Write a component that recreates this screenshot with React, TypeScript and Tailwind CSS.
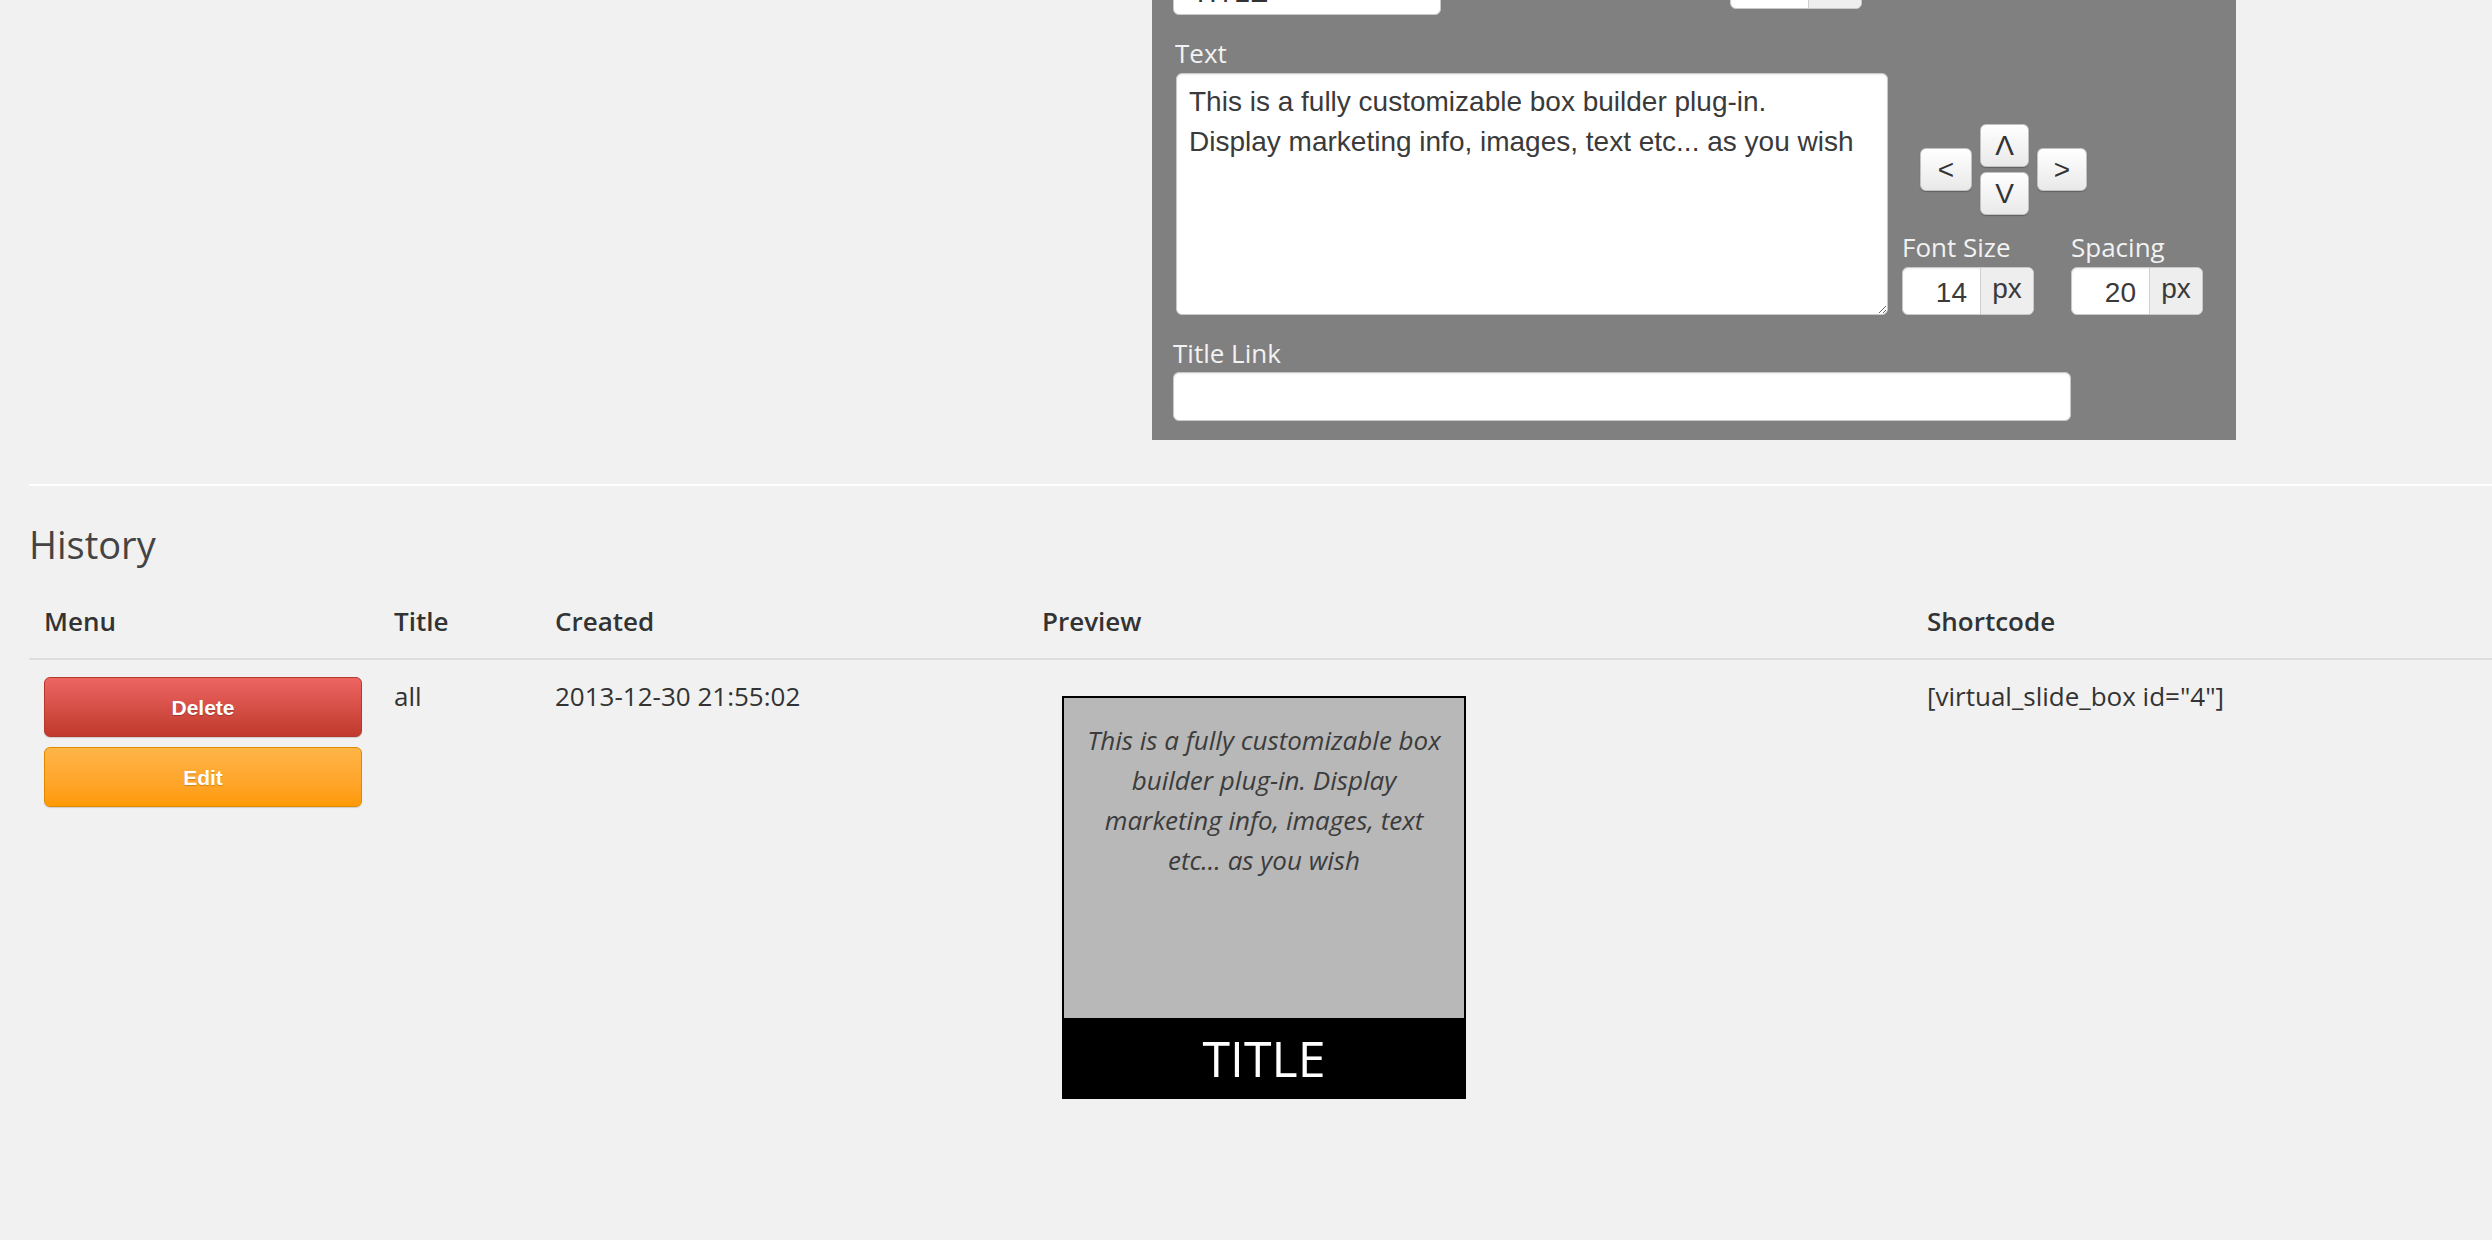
import React from 'react';

const ArrowKey: React.FC<{ label: string; className?: string }> = ({ label, className }) => (
  <div
    className={`h-[43px] flex items-center justify-center rounded-[6px] border border-[#c2c2c2] bg-gradient-to-b from-white to-[#e9e9e9] shadow-[0_1px_1px_rgba(0,0,0,0.25)] text-[28px] text-[#333] font-['Liberation_Sans',Arial,sans-serif] ${className ?? ''}`}
  >
    {label}
  </div>
);

const PxInput: React.FC<{ value: string; label?: string }> = ({ value, label }) => (
  <div>
    {label && <div className="text-[26px] leading-[36px] text-[#f2f2f2]">{label}</div>}
    <div className={`${label ? 'mt-[2px]' : ''} flex h-[48px] w-[132px] rounded-[6px] border border-[#c9c9c9] bg-white overflow-hidden shadow-[inset_0_1px_2px_rgba(0,0,0,0.07)] font-['Liberation_Sans',Arial,sans-serif] text-[28px] text-[#3a3a3a]`}>
      <div className="w-[77px] flex items-center justify-end pr-[13px] pt-[4px]">{value}</div>
      <div className="flex-1 flex items-center justify-center border-l border-[#cfcfcf] bg-[#eeeeee] pb-[4px]">px</div>
    </div>
  </div>
);

const previewLines = [
  'This is a fully customizable box',
  'builder plug-in. Display',
  'marketing info, images, text',
  'etc... as you wish',
];

export default function App() {
  return (
    <div className="min-h-screen w-full overflow-hidden bg-[#f1f1f1] font-['Open_Sans',sans-serif] text-[#333]">
      <div className="pl-[29px]">
        {/* editor panel */}
        <div className="flex">
          <div className="w-[1123px] shrink-0" />
          <div className="w-[1084px] shrink-0 bg-[#808080] pl-[21px] pr-[20px] pb-[19px]">
            <div className="-mt-[33px] flex h-[48px] items-start">
              <div className="h-[48px] w-[268px] overflow-hidden rounded-[6px] border border-[#c9c9c9] bg-white pl-[18px] font-['Liberation_Sans',Arial,sans-serif] text-[28px] leading-[50px] text-[#333]">
                TITLE
              </div>
              <div className="ml-[289px] -mt-[6px]">
                <PxInput value="24" />
              </div>
            </div>

            <div className="mt-[20px] ml-[2px] text-[26px] leading-[36px] text-[#f2f2f2]">Text</div>
            <div className="mt-[2px] flex">
              <textarea
                className="ml-[3px] h-[242px] w-[712px] shrink-0 rounded-[6px] border border-[#c9c9c9] bg-white px-[12px] pt-[8px] font-['Liberation_Sans',Arial,sans-serif] text-[28px] leading-[40px] text-[#3a3a3a] shadow-[inset_0_1px_2px_rgba(0,0,0,0.07)] outline-none"
                defaultValue={'This is a fully customizable box builder plug-in.\nDisplay marketing info, images, text etc... as you wish'}
              />
              <div className="ml-[14px] pt-[51px]">
                <div className="ml-[18px] flex items-center gap-[8px]">
                  <ArrowKey label="<" className="w-[52px]" />
                  <div className="flex flex-col gap-[5px]">
                    <ArrowKey label="Λ" className="w-[49px]" />
                    <ArrowKey label="V" className="w-[49px]" />
                  </div>
                  <ArrowKey label=">" className="w-[50px]" />
                </div>
                <div className="mt-[14px] flex gap-[37px]">
                  <PxInput value="14" label="Font Size" />
                  <PxInput value="20" label="Spacing" />
                </div>
              </div>
            </div>

            <div className="mt-[20px] text-[26px] leading-[36px] text-[#f2f2f2]">Title Link</div>
            <div className="mt-[1px] h-[49px] w-[898px] rounded-[6px] border border-[#c9c9c9] bg-white shadow-[inset_0_1px_2px_rgba(0,0,0,0.07)]" />
          </div>
        </div>

        <div className="mt-[44px] h-[2px] bg-white" />

        <h2 className="mt-[34px] text-[38px] font-medium leading-[49px] text-[#444]">History</h2>

        {/* history table */}
        <div className="mt-[15px] grid grid-cols-[350px_161px_487px_885px_1fr] text-[26px] leading-[39px]">
          {['Menu', 'Title', 'Created', 'Preview', 'Shortcode'].map((h) => (
            <div key={h} className="border-b-2 border-[#dedede] px-[15px] pt-[18px] pb-[17px] font-semibold text-[#333]">
              {h}
            </div>
          ))}

          <div className="px-[15px] pt-[17px] flex flex-col gap-[10px]">
            <button className="h-[60px] w-[318px] rounded-[6px] border border-[#b5382c] bg-gradient-to-b from-[#ee6562] to-[#c0392b] font-['Liberation_Sans',Arial,sans-serif] text-[21px] font-bold text-white [text-shadow:0_1px_1px_rgba(0,0,0,0.25)] shadow-[0_1px_1px_rgba(0,0,0,0.15)]">
              Delete
            </button>
            <button className="h-[60px] w-[318px] rounded-[6px] border border-[#e08a00] bg-gradient-to-b from-[#ffb547] to-[#ff9a00] font-['Liberation_Sans',Arial,sans-serif] text-[21px] font-bold text-white [text-shadow:0_1px_1px_rgba(0,0,0,0.2)] shadow-[0_1px_1px_rgba(0,0,0,0.15)]">
              Edit
            </button>
          </div>
          <div className="px-[15px] pt-[17px]">all</div>
          <div className="px-[15px] pt-[17px]">2013-12-30 21:55:02</div>
          <div className="px-[15px] pt-[17px]">
            <div className="ml-[20px] mt-[19px] mb-[60px] w-[404px] border-2 border-black">
              <div className="h-[320px] bg-[#b8b8b8] pt-[22px] text-center text-[26px] italic leading-[40px] text-[#3c3c3c]">
                {previewLines.map((l) => (
                  <div key={l}>{l}</div>
                ))}
              </div>
              <div className="flex h-[79px] items-center justify-center bg-black text-[50px] leading-none text-white">
                TITLE
              </div>
            </div>
          </div>
          <div className="px-[15px] pt-[17px]">[virtual_slide_box id="4"]</div>
        </div>
      </div>
    </div>
  );
}
